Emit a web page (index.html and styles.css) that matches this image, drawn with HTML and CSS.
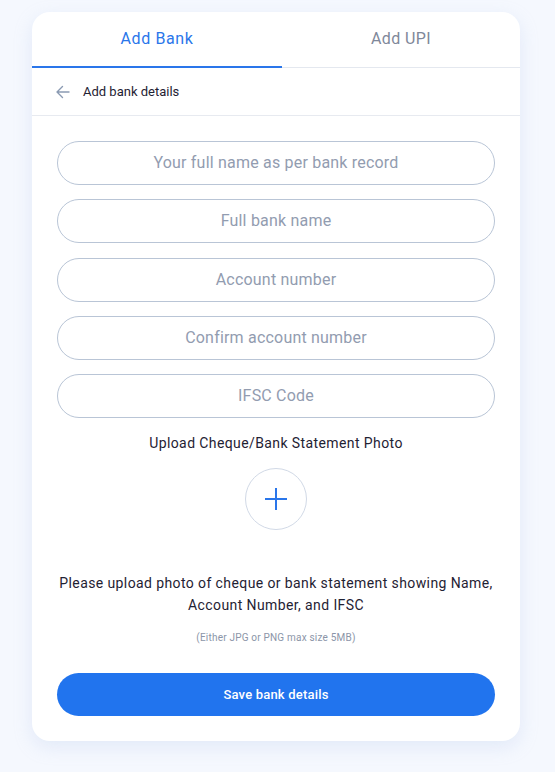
FILE: index.html
```html
<!DOCTYPE html>
<html>
<head>
<meta charset="utf-8">
<link rel="stylesheet" href="styles.css">
</head>
<body>
<div class="page">
  <div class="card">
    <div class="tabs">
      <div class="tab active">Add Bank</div>
      <div class="tab">Add UPI</div>
    </div>
    <div class="back-row">
      <svg class="back-icon" width="16" height="16" viewBox="0 0 16 16" fill="none" stroke="#8a9ab2" stroke-width="1.4" stroke-linecap="round" stroke-linejoin="round">
        <path d="M14 8H2.5M7.5 2.5L2 8l5.5 5.5"/>
      </svg>
      <span class="back-text">Add bank details</span>
    </div>
    <div class="form">
      <div class="fields">
        <div class="field">Your full name as per bank record</div>
        <div class="field">Full bank name</div>
        <div class="field">Account number</div>
        <div class="field">Confirm account number</div>
        <div class="field">IFSC Code</div>
      </div>
      <div class="upload-title">Upload Cheque/Bank Statement Photo</div>
      <div class="upload-btn">
        <svg width="24" height="24" viewBox="0 0 24 24" fill="none" stroke="#2a76ea" stroke-width="2">
          <path d="M12 1v22M1 12h22"/>
        </svg>
      </div>
      <p class="upload-desc">Please upload photo of cheque or bank statement showing Name, Account Number, and IFSC</p>
      <p class="upload-note">(Either JPG or PNG max size 5MB)</p>
      <div class="save-btn">Save bank details</div>
    </div>
  </div>
</div>
</body>
</html>
```
FILE: styles.css
```css
* { box-sizing: border-box; }
html, body { margin: 0; padding: 0; }
body {
  background: #f5f8fe;
  font-family: "Roboto", "Lato", sans-serif;
  width: 555px;
  height: 772px;
}
.page {
  padding: 12px 35px 0 32px;
}
.card {
  width: 488px;
  background: #ffffff;
  border-radius: 18px;
  box-shadow: 0 6px 18px rgba(170, 190, 230, 0.25);
  overflow: hidden;
}
.tabs {
  display: grid;
  grid-template-columns: 250px 1fr;
  border-bottom: 1px solid #e4e8ef;
}
.tab {
  height: 55px;
  display: flex;
  align-items: center;
  justify-content: center;
  font-size: 16px;
  letter-spacing: 0.4px;
  color: #7f889a;
  padding-bottom: 3px;
}
.tab.active {
  color: #2a76ea;
  letter-spacing: 0.6px;
  box-shadow: inset 0 -2px 0 #2a76ea;
  margin-bottom: -1px;
  height: 56px;
}
.back-row {
  height: 48px;
  display: flex;
  align-items: center;
  padding-left: 23px;
  border-bottom: 1px solid #e7eaf0;
  gap: 12px;
}
.back-icon { display: block; }
.back-text {
  font-size: 13px;
  color: #1f2233;
}
.form {
  padding: 25px 25px 25px;
  display: flex;
  flex-direction: column;
  align-items: center;
}
.fields {
  width: 100%;
  display: flex;
  flex-direction: column;
  gap: 14.25px;
}
.field {
  height: 44px;
  border: 1px solid #b9c5d6;
  border-radius: 22px;
  display: flex;
  align-items: center;
  justify-content: center;
  font-size: 16px;
  letter-spacing: 0.2px;
  color: #929cb0;
  padding-bottom: 1px;
}
.upload-title {
  margin-top: 15px;
  font-size: 14px;
  letter-spacing: 0.4px;
  line-height: 20px;
  color: #1f2233;
}
.upload-btn {
  margin-top: 15px;
  width: 62px;
  height: 62px;
  border-radius: 50%;
  border: 1.5px solid #d1d9e6;
  display: flex;
  align-items: center;
  justify-content: center;
}
.upload-desc {
  margin: 42px 0 0;
  font-size: 14px;
  letter-spacing: 0.4px;
  line-height: 22px;
  color: #1f2233;
  text-align: center;
}
.upload-note {
  margin: 15px 0 0;
  font-size: 10px;
  letter-spacing: 0.2px;
  line-height: 14px;
  color: #8b95a8;
}
.save-btn {
  margin-top: 28px;
  width: 100%;
  height: 43px;
  border-radius: 22px;
  background: #2174ee;
  color: #ffffff;
  font-size: 13px;
  letter-spacing: 0.2px;
  font-weight: 500;
  display: flex;
  align-items: center;
  justify-content: center;
}
```
